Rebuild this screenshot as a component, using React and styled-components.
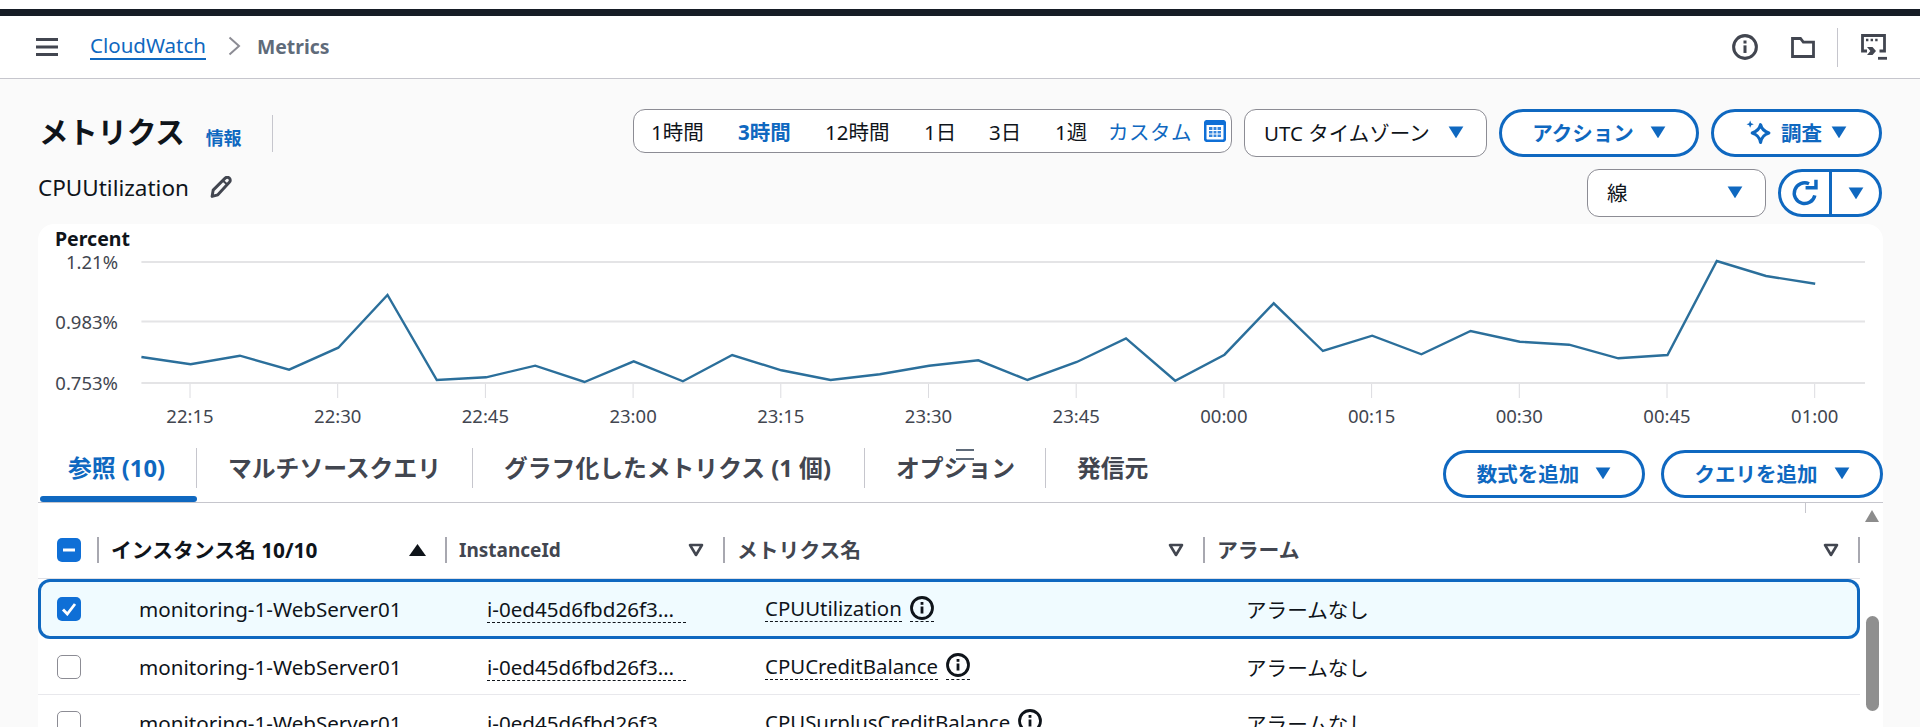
import React from "react";
import styled, { createGlobalStyle } from "styled-components";

const BLUE = "#0f68c0";
const FONT = `"Noto Sans", "Noto Sans CJK JP", sans-serif`;

const Global = createGlobalStyle`
  html, body {
    margin: 0;
    height: 727px;
    overflow: hidden;
    background: #fafafa;
    font-family: ${FONT};
    color: #0f141a;
  }
  * { box-sizing: border-box; }
`;

const Page = styled.div`
  width: 1920px;
  height: 727px;
  overflow: hidden;
`;

const TopStrip = styled.div`
  height: 16px;
  background: #fff;
  border-bottom: 7px solid #161d26;
`;

const Header = styled.header`
  height: 63px;
  background: #fff;
  border-bottom: 1px solid #c6c6cd;
  display: flex;
  align-items: center;
  padding: 0 32px 0 36px;
`;

const Crumbs = styled.nav`
  flex: 1;
  display: flex;
  align-items: center;
  margin-top: -2px;
`;

const Link = styled.a`
  margin-left: 32px;
  font-size: 20.5px;
  line-height: 26px;
  color: ${BLUE};
  border-bottom: 2px solid ${BLUE};
`;

const CrumbLast = styled.span`
  margin-left: 16px;
  font-size: 19.4px;
  font-weight: 700;
  color: #5f6b7a;
`;

const HeaderIcons = styled.div`
  display: flex;
  align-items: center;
`;

const HeaderDivider = styled.span`
  width: 1px;
  height: 39px;
  background: #c6c6cd;
  margin: 0 23px 0 22px;
`;

const Head = styled.section`
  display: flex;
  justify-content: space-between;
  padding: 30px 38px 0 39px;
  height: 145px;
`;

const TitleRow = styled.div`
  display: flex;
  align-items: center;
  height: 48px;
`;

const Title = styled.h1`
  margin: -2px 0 0;
  font-size: 29.5px;
  font-weight: 700;
  line-height: 48px;
  letter-spacing: -0.2px;
`;

const InfoLink = styled.a`
  margin: 8px 0 0 21px;
  font-size: 18px;
  font-weight: 700;
  color: ${BLUE};
`;

const TitleDivider = styled.span`
  width: 1px;
  height: 37px;
  background: #c6c6cd;
  margin-left: 30px;
`;

const SubRow = styled.div`
  display: flex;
  align-items: center;
  gap: 21px;
  height: 36px;
  margin: 12px 0 0 -1px;
  font-size: 22.5px;
`;

const Controls = styled.div`
  display: flex;
  flex-direction: column;
  align-items: flex-end;
  gap: 12px;
`;

const ControlRow = styled.div`
  display: flex;
  align-items: flex-start;
  gap: ${(p) => p.$gap || 12}px;
`;

const RangeBar = styled.div`
  width: 599px;
  height: 44px;
  display: flex;
  align-items: center;
  padding: 0 0 1px 17px;
  background: #fff;
  border: 1px solid #8c8c94;
  border-radius: 12px;
  font-size: 20.5px;
`;

const RangeItem = styled.span`
  width: ${(p) => p.$w}px;
  flex: none;
  font-weight: ${(p) => (p.$active ? 700 : 400)};
  color: ${(p) => (p.$active ? BLUE : "#0f141a")};
`;

const Custom = styled.span`
  width: 96px;
  flex: none;
  margin-left: -1px;
  color: ${BLUE};
  letter-spacing: 0.5px;
`;

const Select = styled.div`
  width: ${(p) => p.$w}px;
  height: 48px;
  display: flex;
  align-items: center;
  justify-content: space-between;
  padding: 0 22px 2px ${(p) => p.$left || 19}px;
  background: #fff;
  border: 1px solid #8c8c94;
  border-radius: 12px;
  font-size: 20.5px;
`;

const PillButton = styled.button`
  width: ${(p) => p.$w}px;
  height: 48px;
  flex: none;
  display: flex;
  align-items: center;
  justify-content: center;
  gap: ${(p) => p.$gap || 16}px;
  padding: 0 0 2px;
  background: #fff;
  border: 3px solid ${BLUE};
  border-radius: 24px;
  color: ${BLUE};
  font: 700 20.5px ${FONT};
`;

const SplitButton = styled.div`
  width: 104px;
  height: 48px;
  display: flex;
  background: #fff;
  border: 3px solid ${BLUE};
  border-radius: 24px;
`;

const SplitPart = styled.span`
  flex: 1;
  display: flex;
  align-items: center;
  justify-content: center;
  & + & {
    flex: 0 0 50px;
    border-left: 3px solid ${BLUE};
  }
`;

const Panel = styled.main`
  width: 1845px;
  margin: 0 0 0 38px;
  background: #fff;
  border-radius: 16px 16px 0 0;
  position: relative;
`;

const ChartBox = styled.div`
  height: 216px;
  svg {
    display: block;
    font-family: ${FONT};
  }
`;

const TabBar = styled.div`
  height: 63px;
  display: flex;
  align-items: flex-start;
  justify-content: space-between;
  border-bottom: 1px solid #c6c6cd;
  position: relative;
`;

const Tabs = styled.div`
  display: flex;
  margin-left: 2px;
  padding-top: 8px;
`;

const Tab = styled.div`
  width: ${(p) => p.$w}px;
  height: 40px;
  display: flex;
  align-items: center;
  padding-left: ${(p) => p.$left || 31}px;
  font-size: 23.8px;
  font-weight: 700;
  line-height: 38px;
  white-space: nowrap;
  color: ${(p) => (p.$active ? BLUE : "#424650")};
  border-right: ${(p) => (p.$last ? "none" : "1px solid #c6c6cd")};
  position: relative;
  &::after {
    content: "";
    display: ${(p) => (p.$active ? "block" : "none")};
    position: absolute;
    left: 0;
    right: -1px;
    top: 48px;
    height: 6px;
    border-radius: 3px;
    background: ${BLUE};
  }
`;

const TabActions = styled.div`
  display: flex;
  gap: 16px;
  padding-top: 10px;
`;

const ResizeHandle = styled.span`
  position: absolute;
  left: 918px;
  top: 9px;
  width: 18px;
  height: 11px;
  border-top: 2px solid #5f6b7a;
  border-bottom: 2px solid #5f6b7a;
`;

const TableArea = styled.div`
  display: flex;
  position: relative;
`;

const TopTick = styled.span`
  position: absolute;
  left: 1767px;
  top: 0;
  width: 1px;
  height: 10px;
  background: #c6c6cd;
`;

const Table = styled.div`
  width: 1822px;
  padding-top: 34px;
`;

const HeadRow = styled.div`
  display: grid;
  grid-template-columns: 59px 348px 278px 480px 1fr;
  grid-template-rows: 26px;
  height: 42px;
  padding-bottom: 15px;
  border-bottom: 1px solid #e0e0e5;
`;

const HeadCell = styled.div`
  display: flex;
  align-items: center;
  justify-content: space-between;
  padding: 0 19px 0 12px;
  font-size: ${(p) => p.$size || 20.8}px;
  font-weight: 700;
  line-height: 26px;
  color: ${(p) => (p.$dark ? "#0f141a" : "#424650")};
  border-left: 2.5px solid #a8a8b0;
  white-space: nowrap;
`;

const LastHeadCell = styled(HeadCell)`
  border-right: 2.5px solid #a8a8b0;
`;

const CheckCell = styled.div`
  display: flex;
  align-items: center;
  padding-left: 19px;
`;

const Row = styled.div`
  display: grid;
  grid-template-columns: 59px 348px 278px 480px 1fr;
  align-items: center;
  height: ${(p) => (p.$selected ? 60 : 56)}px;
  font-size: 20.6px;
  white-space: nowrap;
  background: ${(p) => (p.$selected ? "#f0fbff" : "#fff")};
  border-radius: ${(p) => (p.$selected ? "12px" : "0")};
  box-shadow: ${(p) => (p.$selected ? `inset 0 0 0 3px ${BLUE}` : "none")};
  border-bottom: ${(p) => (p.$selected ? "none" : "1px solid #e8e8ec")};
`;

const NameCell = styled.div`
  padding-left: ${(p) => p.$pad}px;
`;

const Dashed = styled.span`
  display: inline-block;
  width: ${(p) => (p.$w ? `${p.$w}px` : "auto")};
  line-height: 25px;
  border-bottom: 1.5px dashed #0f141a;
`;

const MetricCell = styled.div`
  display: flex;
  align-items: center;
  gap: 8px;
  padding-left: ${(p) => p.$pad}px;
  font-size: 20.4px;
`;

const IconWrap = styled.span`
  display: inline-flex;
  height: 26.5px;
  border-bottom: 1.5px dashed #0f141a;
`;

const Box = styled.span`
  width: 24px;
  height: 24px;
  display: flex;
  align-items: center;
  justify-content: center;
  border-radius: 5px;
  background: ${(p) => (p.$on ? "#0f6fd6" : "#fff")};
  border: ${(p) => (p.$on ? "none" : "1.5px solid #8c8c94")};
`;

const ScrollTrack = styled.div`
  width: 15px;
  margin-left: 5px;
  padding-top: 7px;
  display: flex;
  flex-direction: column;
`;

const ScrollUp = styled.span`
  width: 0;
  height: 0;
  border-left: 7.5px solid transparent;
  border-right: 7.5px solid transparent;
  border-bottom: 12px solid #8c8c8c;
`;

const ScrollThumb = styled.span`
  width: 13px;
  height: 95px;
  margin: 94px 0 0 1px;
  background: #8f8f8f;
  border-radius: 7px;
`;

function Caret({ size = 16, color = BLUE }) {
  return (
    <svg width={size} height={size * 0.8} viewBox="0 0 16 13">
      <path d="M0.5 0.5h15L8 12.5z" fill={color} />
    </svg>
  );
}

function SortOutline() {
  return (
    <svg width="16" height="14" viewBox="0 0 16 14">
      <path d="M2 2h12L8 12z" fill="none" stroke="#424650" strokeWidth="2.6" strokeLinejoin="round" />
    </svg>
  );
}

function Hamburger() {
  return (
    <svg width="22" height="18" viewBox="0 0 22 18">
      <path d="M0 1.5h22M0 9h22M0 16.5h22" stroke="#424650" strokeWidth="2.8" />
    </svg>
  );
}

function Chevron() {
  return (
    <svg width="13" height="20" viewBox="0 0 13 20" style={{ marginLeft: 22 }}>
      <path d="M1.5 1.5L11 10 1.5 18.5" fill="none" stroke="#8c8c94" strokeWidth="2" />
    </svg>
  );
}

function InfoIcon({ size = 24, color = "#424650", weight = 2.8 }) {
  return (
    <svg width={size} height={size} viewBox="0 0 24 24">
      <circle cx="12" cy="12" r="10.5" fill="none" stroke={color} strokeWidth={weight} />
      <path d="M12 10.5v7" stroke={color} strokeWidth="2.8" />
      <path d="M12 6v2.8" stroke={color} strokeWidth="2.8" />
    </svg>
  );
}

function FolderIcon() {
  return (
    <svg width="24" height="21" viewBox="0 0 24 21" style={{ marginLeft: 33 }}>
      <path d="M1.5 1.5h8l2.8 3.6h10.2v14.4h-21z" fill="none" stroke="#424650" strokeWidth="2.8" />
    </svg>
  );
}

function ShellIcon() {
  return (
    <svg width="27" height="26" viewBox="0 0 27 26">
      <path d="M6 17H1.5V1.5h22V17h-5" fill="none" stroke="#424650" strokeWidth="2.8" />
      <path d="M5 6h2.4M9.6 6H12M14.2 6h2.4" stroke="#424650" strokeWidth="2.6" />
      <path d="M6 13h5.5l3.5 4-3.5 4H6l3.4-4z" fill="#424650" />
      <path d="M17 24.3h9" stroke="#424650" strokeWidth="2.8" />
    </svg>
  );
}

function Pencil() {
  return (
    <svg width="23" height="22" viewBox="0 0 22 21">
      <path d="M2 19.5l1-6L14.5 2c1.2-1.1 2.8-1.1 4 0s1.2 2.8 0 4L7.5 18z" fill="none" stroke="#424650" strokeWidth="2.8" strokeLinejoin="round" />
      <path d="M12.5 4.5l4.5 4" stroke="#424650" strokeWidth="2" />
    </svg>
  );
}

function CalendarIcon() {
  return (
    <svg width="22" height="22" viewBox="0 0 22 22">
      <rect x="1.2" y="1.2" width="19.6" height="19.6" rx="2" fill="none" stroke="#0f6fd6" strokeWidth="2.6" />
      <path d="M1 2h20v3H1z" fill="#0f6fd6" />
      <path d="M5 7h12v10H5z" fill="#0f6fd6" opacity=".85" />
      <path d="M9 7v10M13 7v10M5 10.5h12M5 14h12" stroke="#fff" strokeWidth="1.1" />
    </svg>
  );
}

function Sparkle() {
  return (
    <svg width="26" height="25" viewBox="0 0 25 24">
      <path d="M14 4.5c1 4.2 3 6.3 8 8-5 1.7-7 3.8-8 9-1-5.2-3-7.3-8-9 5-1.7 7-3.8 8-8z" fill="none" stroke={BLUE} strokeWidth="3" strokeLinejoin="round" />
      <path d="M4 0.5l1 2.5 2.5 1L5 5 4 7.5 3 5 .5 4 3 3z" fill={BLUE} />
    </svg>
  );
}

function RefreshIcon() {
  return (
    <svg width="30" height="28" viewBox="0 0 26 24">
      <path d="M21.5 14a9 9 0 1 1-5-10" fill="none" stroke={BLUE} strokeWidth="3" />
      <path d="M13.5 7.5h9V0.5" fill="none" stroke={BLUE} strokeWidth="3" />
    </svg>
  );
}

const CHART_X = 103.4;
const STEP = 49.23;
const LINE_Y = [
  357, 364.3, 355.7, 369.7, 347.7, 295, 380, 377.3, 365.7, 382, 361.3, 381.3, 355, 370.3, 380, 374.3, 365.7,
  360.3, 380, 362, 338.3, 380.7, 354.7, 303.3, 351, 335.7, 354.3, 331, 341.7, 344.7, 358.3, 355, 261, 276, 283.7,
];
const TICKS = [
  "22:15", "22:30", "22:45", "23:00", "23:15", "23:30", "23:45", "00:00", "00:15", "00:30", "00:45", "01:00",
];

function Chart() {
  const points = LINE_Y.map((y, i) => `${(CHART_X + i * STEP).toFixed(1)},${(y - 224).toFixed(1)}`).join(" ");
  return (
    <ChartBox>
      <svg width="1845" height="216" viewBox="0 0 1845 216">
        <text x="17" y="22" fontSize="19.5" fontWeight="700" fill="#0f141a">Percent</text>
        {[["1.21%", 38, 45], ["0.983%", 97.5, 105], ["0.753%", 159, 166]].map(([label, y, ty]) => (
          <g key={label}>
            <line x1={CHART_X} x2="1827" y1={y} y2={y} stroke="#e4e4e6" strokeWidth="2" />
            <text x="80" y={ty} textAnchor="end" fontSize="18.5" fill="#424650">{label}</text>
          </g>
        ))}
        {TICKS.map((t, i) => {
          const x = 152 + i * 147.7;
          return (
            <g key={t}>
              <line x1={x} x2={x} y1="160" y2="174" stroke="#dcdce0" strokeWidth="1" />
              <text x={x} y="199" textAnchor="middle" fontSize="18.5" fill="#424650">{t}</text>
            </g>
          );
        })}
        <polyline points={points} fill="none" stroke="#2b6f9b" strokeWidth="2.4" strokeLinejoin="miter" />
      </svg>
    </ChartBox>
  );
}

const ROWS = [
  { metric: "CPUUtilization", selected: true },
  { metric: "CPUCreditBalance" },
  { metric: "CPUSurplusCreditBalance" },
];

export default function App() {
  return (
    <Page>
      <Global />
      <TopStrip />
      <Header>
        <Hamburger />
        <Crumbs>
          <Link>CloudWatch</Link>
          <Chevron />
          <CrumbLast>Metrics</CrumbLast>
        </Crumbs>
        <HeaderIcons>
          <InfoIcon size={26} />
          <FolderIcon />
          <HeaderDivider />
          <ShellIcon />
        </HeaderIcons>
      </Header>

      <Head>
        <div>
          <TitleRow>
            <Title>メトリクス</Title>
            <InfoLink>情報</InfoLink>
            <TitleDivider />
          </TitleRow>
          <SubRow>
            CPUUtilization
            <Pencil />
          </SubRow>
        </div>
        <Controls>
          <ControlRow>
            <RangeBar>
              <RangeItem $w={87}>1時間</RangeItem>
              <RangeItem $w={87} $active>3時間</RangeItem>
              <RangeItem $w={99}>12時間</RangeItem>
              <RangeItem $w={65}>1日</RangeItem>
              <RangeItem $w={66}>3日</RangeItem>
              <RangeItem $w={54}>1週</RangeItem>
              <Custom>カスタム</Custom>
              <CalendarIcon />
            </RangeBar>
            <Select $w={243}>
              UTC タイムゾーン
              <Caret />
            </Select>
            <PillButton $w={200}>
              アクション
              <Caret />
            </PillButton>
            <PillButton $w={171} $gap={9}>
              <Sparkle />
              調査
              <Caret />
            </PillButton>
          </ControlRow>
          <ControlRow>
            <Select $w={179}>
              線
              <Caret />
            </Select>
            <SplitButton>
              <SplitPart><RefreshIcon /></SplitPart>
              <SplitPart><Caret /></SplitPart>
            </SplitButton>
          </ControlRow>
        </Controls>
      </Head>

      <Panel>
        <Chart />
        <TabBar>
          <Tabs>
            <Tab $w={157} $left={28} $active>参照 (10)</Tab>
            <Tab $w={276}>マルチソースクエリ</Tab>
            <Tab $w={392}>グラフ化したメトリクス (1 個)</Tab>
            <Tab $w={181}>オプション</Tab>
            <Tab $w={140} $last>発信元</Tab>
          </Tabs>
          <TabActions>
            <PillButton $w={202}>
              数式を追加
              <Caret />
            </PillButton>
            <PillButton $w={222}>
              クエリを追加
              <Caret />
            </PillButton>
          </TabActions>
          <ResizeHandle />
        </TabBar>
        <TableArea>
          <TopTick />
          <Table>
            <HeadRow>
              <CheckCell>
                <Box $on>
                  <svg width="14" height="4" viewBox="0 0 14 4"><path d="M1 2h12" stroke="#fff" strokeWidth="3" /></svg>
                </Box>
              </CheckCell>
              <HeadCell $dark>
                インスタンス名 10/10
                <svg width="17" height="12" viewBox="0 0 17 12"><path d="M8.5 0L17 12H0z" fill="#0f141a" /></svg>
              </HeadCell>
              <HeadCell $size={19}>
                InstanceId
                <SortOutline />
              </HeadCell>
              <HeadCell>
                メトリクス名
                <SortOutline />
              </HeadCell>
              <LastHeadCell>
                アラーム
                <SortOutline />
              </LastHeadCell>
            </HeadRow>
            {ROWS.map((r) => (
              <Row key={r.metric} $selected={r.selected}>
                <CheckCell>
                  <Box $on={r.selected}>
                    {r.selected && (
                      <svg width="16" height="14" viewBox="0 0 16 14">
                        <path d="M2 7.5L6.3 12 14 2" fill="none" stroke="#fff" strokeWidth="2.8" />
                      </svg>
                    )}
                  </Box>
                </CheckCell>
                <NameCell $pad={42}>monitoring-1-WebServer01</NameCell>
                <NameCell $pad={42}><Dashed $w={199}>i-0ed45d6fbd26f3…</Dashed></NameCell>
                <MetricCell $pad={42}>
                  <Dashed>{r.metric}</Dashed>
                  <IconWrap><InfoIcon color="#0f141a" /></IconWrap>
                </MetricCell>
                <NameCell $pad={43}>アラームなし</NameCell>
              </Row>
            ))}
          </Table>
          <ScrollTrack>
            <ScrollUp />
            <ScrollThumb />
          </ScrollTrack>
        </TableArea>
      </Panel>
    </Page>
  );
}
